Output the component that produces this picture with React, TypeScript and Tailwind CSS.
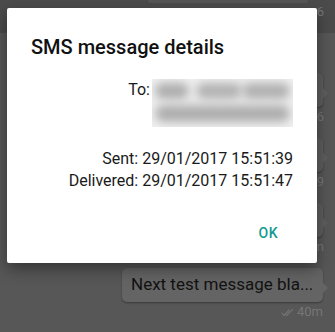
import React from "react";

function Checks() {
  return (
    <svg width="13" height="9" viewBox="0 0 13 9" fill="none" stroke="#737373" strokeWidth="1.2" strokeLinecap="round">
      <path d="M1 5 L3 7.5 L8 2" />
      <path d="M5.5 7.5 L11.5 1.5" />
    </svg>
  );
}

function Bubble({ text, time, w }: { text: string; time: string; w: string }) {
  return (
    <div className="flex flex-col items-end">
      <div className="relative mr-[12px]">
        <div className={`h-[34px] ${w} rounded-[5px] bg-[#646464] shadow-[0_1px_2px_rgba(0,0,0,0.35)] flex items-center pl-[9px] pr-[10px] text-[17px] text-[#121212] whitespace-nowrap overflow-hidden`}>
          {text}
        </div>
        <div className="absolute right-[-5px] top-[15px] w-0 h-0 border-y-[5px] border-y-transparent border-l-[5px] border-l-[#646464]" />
      </div>
      <div className="h-[20px] mr-[12px] flex items-center gap-[3px] text-[13px] text-[#767676]">
        {time ? <Checks /> : null}
        <span>{time}</span>
      </div>
    </div>
  );
}

function HiddenBubble({ time }: { time: string }) {
  return (
    <div className="flex flex-col items-end">
      <div className="relative mr-[12px]">
        <div className="h-[34px] w-[200px] rounded-[5px] bg-[#5e5e5e] shadow-[0_1px_2px_rgba(0,0,0,0.35)]" />
        <div className="absolute right-[-5px] top-[15px] w-0 h-0 border-y-[5px] border-y-transparent border-l-[5px] border-l-[#5e5e5e]" />
      </div>
      <div className="h-[20px] mr-[11px] flex items-center text-[13px] text-[#767676]">{time}</div>
    </div>
  );
}

export default function App() {
  return (
    <div
      className="relative w-[335px] h-[332px] overflow-hidden bg-[#575757]"
      style={{ fontFamily: "Roboto, 'Noto Sans', sans-serif" }}
    >
      <div className="h-[33px] bg-[#4b4b4b] flex flex-col items-end">
        <div className="h-[3px] w-[160px] mr-[27px] bg-[#555555] rounded-b-[3px]" />
        <div className="mr-[11px] mt-[1px] text-[13px] leading-[16px] text-[#767676]">6</div>
      </div>
      <div className="mt-[40px] flex flex-col gap-[11px]">
        <HiddenBubble time="6" />
        <HiddenBubble time="9" />
        <HiddenBubble time="m" />
        <Bubble text="Next test message bla..." time="40m" w="w-[201px]" />
      </div>

      <div className="absolute left-[7px] top-[8px] w-[310px] h-[255px] bg-white rounded-[2px] shadow-[0_6px_16px_rgba(0,0,0,0.4)] flex flex-col px-[24px] pt-[27px]">
        <div className="text-[20px] leading-[24px] font-medium text-[#111111]">SMS message details</div>
        <div className="mt-[20px] flex justify-end text-[16px] leading-[22px] text-[#1a1a1a]">
          <span>To:</span>
          <div className="relative ml-[2px] w-[141px] h-[48px] bg-[#f0f0f0] overflow-hidden">
            <div className="absolute left-[3px] top-[4px] w-[34px] h-[16px] rounded-full bg-[#adadad] blur-[5px]" />
            <div className="absolute left-[44px] top-[4px] w-[46px] h-[16px] rounded-full bg-[#b2b2b2] blur-[5px]" />
            <div className="absolute left-[90px] top-[4px] w-[48px] h-[16px] rounded-full bg-[#b0b0b0] blur-[5px]" />
            <div className="absolute left-[3px] top-[26px] w-[135px] h-[17px] rounded-full bg-[#aeaeae] blur-[5px]" />
          </div>
        </div>
        <div className="mt-[21px] flex flex-col items-end text-[16px] leading-[22px] text-[#1a1a1a]">
          <div>Sent: 29/01/2017 15:51:39</div>
          <div>Delivered: 29/01/2017 15:51:47</div>
        </div>
        <div className="mt-[31px] flex justify-end pr-[15px]">
          <span className="text-[14px] leading-[20px] font-medium text-[#129a92] tracking-[0.5px]">OK</span>
        </div>
      </div>
    </div>
  );
}
